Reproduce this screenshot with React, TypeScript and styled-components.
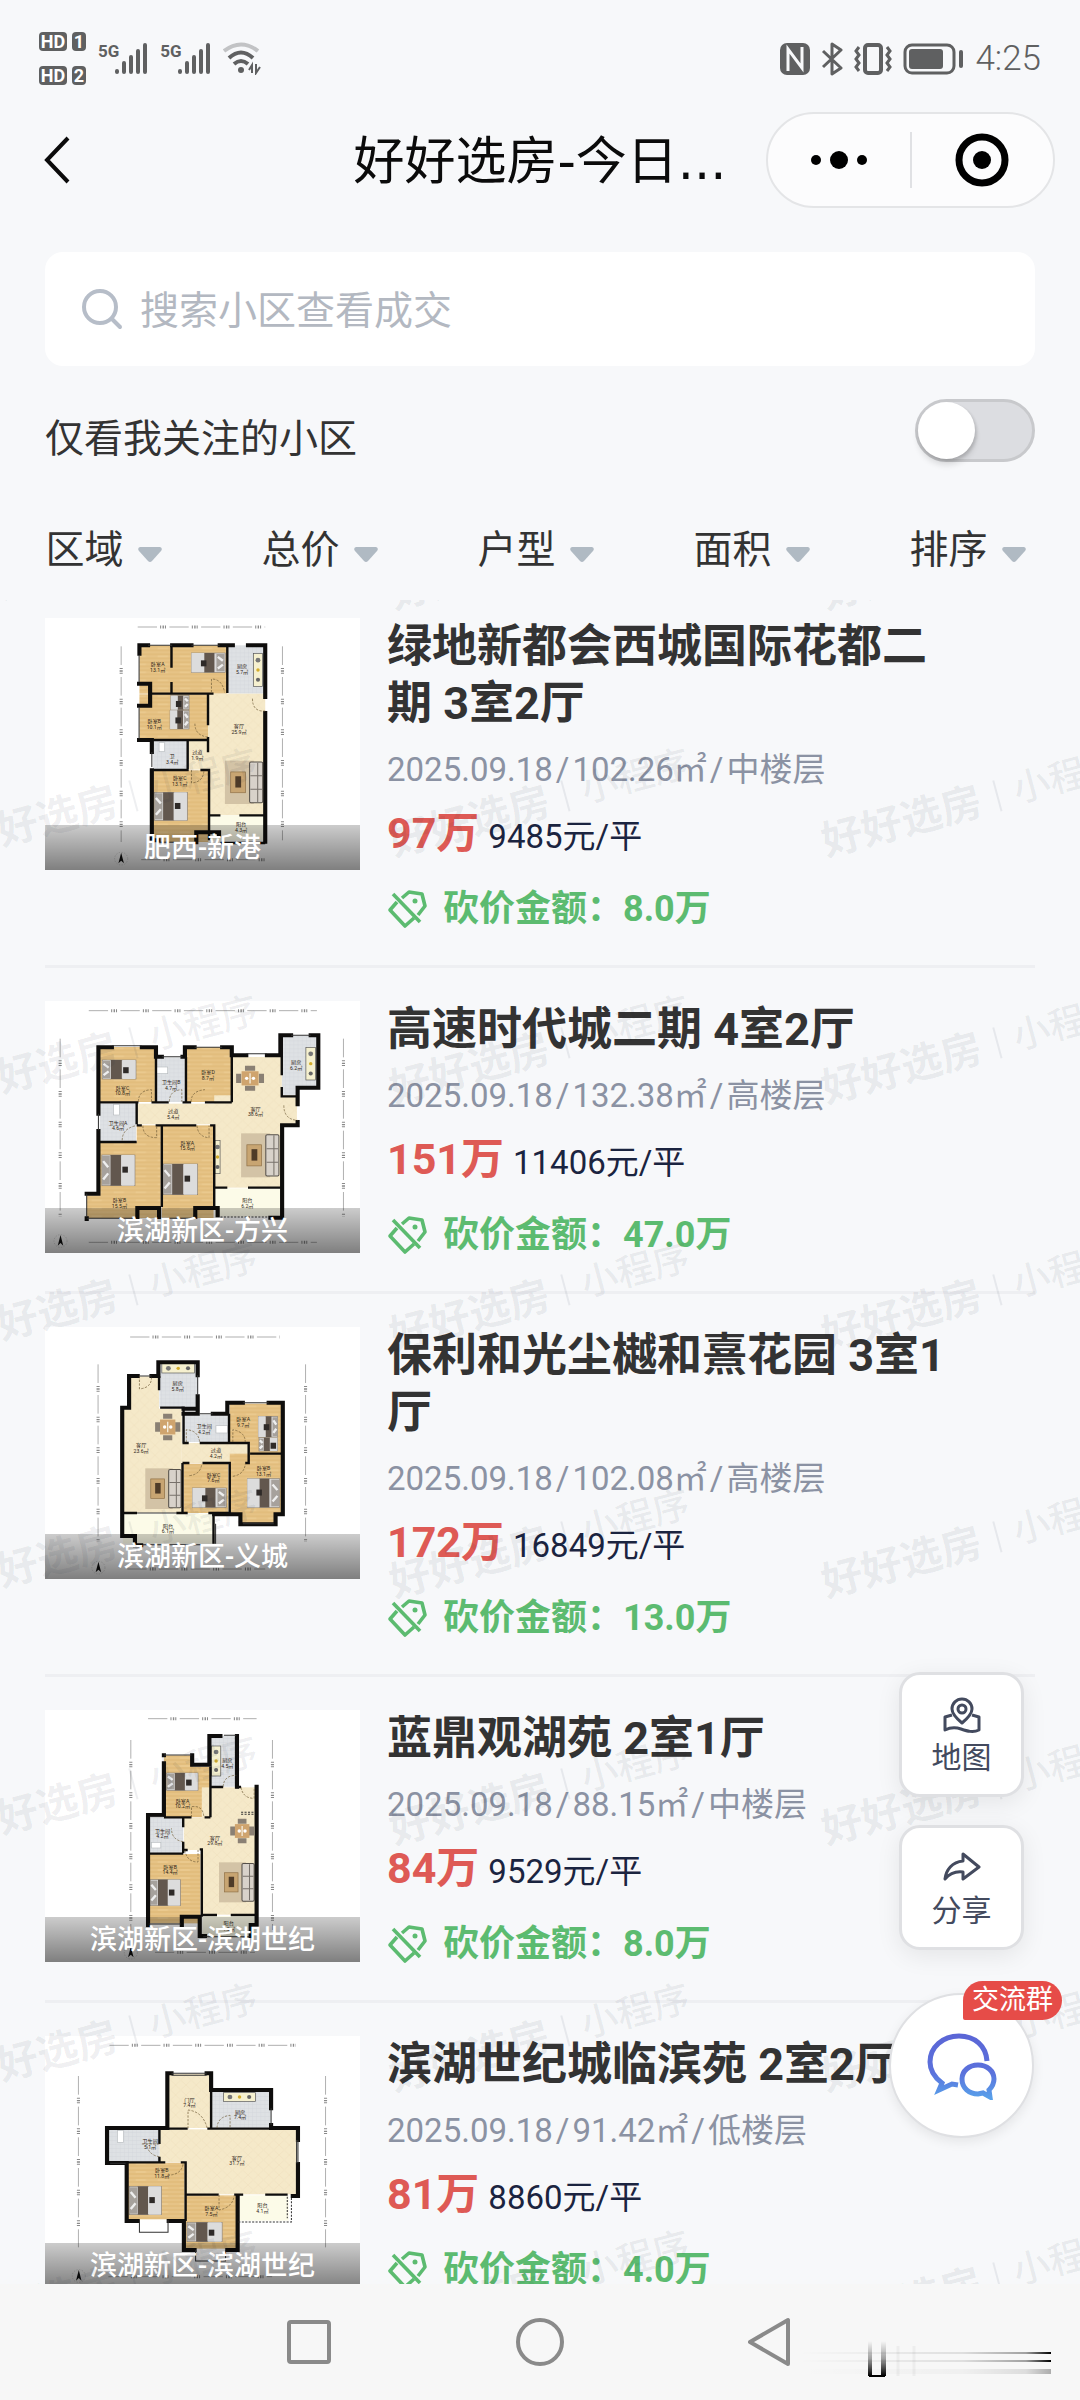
import React from "react";
import styled, { createGlobalStyle } from "styled-components";

const sans = `Roboto, "Noto Sans CJK SC", sans-serif`;

const GlobalStyle = createGlobalStyle`
  *, *::before, *::after { box-sizing: border-box; }
  html, body { margin: 0; padding: 0; }
  body { background: #f7f8fa; font-family: ${sans}; color: #333; }
  button, input { font-family: inherit; color: inherit; }
  button { border: 0; padding: 0; background: none; cursor: pointer; }
`;

/* ---------- page frame ---------- */

const Screen = styled.div`
  position: relative;
  display: flex;
  flex-direction: column;
  height: 100vh;
  overflow: hidden;
  background: #f7f8fa;
`;

const StatusBar = styled.div`
  display: flex;
  align-items: center;
  justify-content: space-between;
  height: 112px;
  padding: 5px 39px 0;
  color: #5f6061;
`;

const StatusGroup = styled.div<{ $gap: number }>`
  display: flex;
  align-items: center;
  gap: ${(p) => p.$gap}px;
`;

const HdStack = styled.div`
  display: flex;
  flex-direction: column;
  gap: 15px;
`;

const HdRow = styled.div`
  display: flex;
  gap: 5px;
`;

const HdBox = styled.span<{ $w: number }>`
  width: ${(p) => p.$w}px;
  height: 19px;
  border-radius: 4px;
  background: #5f6061;
  color: #fff;
  font-size: 18px;
  line-height: 19px;
  font-weight: 700;
  text-align: center;
`;

const Network = styled.div`
  display: flex;
  align-items: flex-start;
`;

const NetworkLabel = styled.span`
  margin-right: -4px;
  font-size: 17px;
  line-height: 16px;
  font-weight: 700;
`;

const Clock = styled.time`
  font-size: 35px;
  line-height: 40px;
  font-weight: 300;
`;

const NavBar = styled.header`
  display: grid;
  grid-template-columns: 1fr auto 1fr;
  align-items: center;
  height: 96px;
  padding: 0 25px;
`;

const BackButton = styled.button`
  display: flex;
  justify-self: start;
  margin-left: 12px;
`;

const NavTitle = styled.h1`
  margin: 0;
  padding-top: 4px;
  color: #0b0b0b;
  font-family: "DejaVu Sans", "Noto Sans CJK SC", sans-serif;
  font-size: 51px;
  line-height: 72px;
  font-weight: 400;
  white-space: nowrap;
`;

const Capsule = styled.div`
  display: flex;
  align-items: center;
  justify-self: end;
  width: 289px;
  height: 96px;
  border: 2px solid #e4e5e7;
  border-radius: 48px;
  background: #fcfcfd;
`;

const CapsuleButton = styled.button`
  display: flex;
  flex: 1;
  align-items: center;
  justify-content: center;
  height: 100%;
`;

const CapsuleRule = styled.i`
  width: 2px;
  height: 56px;
  background: #e0e1e4;
`;

/* ---------- search and filters ---------- */

const SearchBox = styled.label`
  display: flex;
  align-items: center;
  gap: 17px;
  height: 114px;
  margin: 44px 45px 0;
  padding: 0 36px;
  border-radius: 18px;
  background: #fff;
`;

const SearchInput = styled.input`
  flex: 1;
  min-width: 0;
  height: 60px;
  padding: 4px 0 0;
  border: 0;
  outline: 0;
  background: transparent;
  font-size: 39px;

  &::placeholder {
    color: #b3b8c1;
    opacity: 1;
  }
`;

const FollowRow = styled.div`
  display: flex;
  align-items: center;
  justify-content: space-between;
  margin: 33px 45px 0;
  height: 63px;
`;

const FollowLabel = styled.label`
  padding-top: 16px;
  font-size: 39px;
  line-height: 50px;
`;

const Switch = styled.input`
  appearance: none;
  display: flex;
  width: 120px;
  height: 63px;
  margin: 0;
  padding: 0;
  border: 3px solid #c8c9cc;
  border-radius: 32px;
  background: #dcdde1;
  cursor: pointer;

  &::before {
    content: "";
    width: 57px;
    height: 57px;
    border-radius: 50%;
    background: #fff;
    box-shadow: 0 6px 6px rgba(0, 0, 0, 0.12), 2px 2px 3px rgba(0, 0, 0, 0.12);
  }
  &:checked::before {
    margin-left: auto;
  }
`;

const Filters = styled.nav`
  display: grid;
  grid-template-columns: repeat(5, 1fr);
  height: 138px;
  padding-top: 63px;
`;

const FilterButton = styled.button`
  display: flex;
  align-items: center;
  justify-content: center;
  gap: 14px;
  height: 50px;
  padding-right: 9px;
  font-size: 39px;
  line-height: 50px;

  svg {
    margin-top: 8px;
  }
`;

/* ---------- deal list ---------- */

const ListArea = styled.main`
  position: relative;
  flex: 1;
  min-height: 0;
  overflow: hidden;
`;

const List = styled.ul`
  margin: 0;
  padding: 0 45px;
  list-style: none;
`;

const Item = styled.li`
  display: flex;
  align-items: flex-start;
  gap: 27px;
  padding: 33px 0 31px;
  border-bottom: 3px solid #eeeff2;

  &:first-child {
    padding-top: 18px;
  }
`;

const Thumb = styled.figure`
  position: relative;
  flex: none;
  width: 315px;
  height: 252px;
  margin: 0;
  background: #fff;

  svg {
    display: block;
  }
`;

const ThumbCaption = styled.figcaption`
  position: absolute;
  inset: auto 0 0;
  padding-top: 2px;
  background: linear-gradient(rgba(0, 0, 0, 0.2), rgba(0, 0, 0, 0.5));
  color: #fff;
  font-size: 27px;
  line-height: 43px;
  font-weight: 500;
  text-align: center;
`;

const Info = styled.div`
  display: flex;
  flex: 1;
  flex-direction: column;
  min-width: 0;
`;

const ItemTitle = styled.h2`
  max-width: 560px;
  margin: 0;
  font-size: 45px;
  line-height: 57px;
  font-weight: 700;
`;

const Meta = styled.div`
  display: flex;
  gap: 3px;
  margin-top: 13px;
  color: #8b92a3;
  font-size: 33px;
  line-height: 50px;
`;

const PriceRow = styled.div`
  display: flex;
  align-items: baseline;
  gap: 9px;
  margin-top: 8px;
`;

const Price = styled.strong`
  color: #de5a55;
  font-size: 43px;
  line-height: 60px;
  font-weight: 700;
`;

const UnitPrice = styled.span`
  color: #1b2440;
  font-size: 33px;
  line-height: 40px;
`;

const Cut = styled.div`
  display: flex;
  align-items: center;
  gap: 16px;
  margin-top: 21px;
  color: #5cbb70;
  font-size: 36px;
  line-height: 50px;
  font-weight: 700;
`;

/* ---------- watermark ---------- */

const WatermarkLayer = styled.div`
  position: absolute;
  inset: 0;
  overflow: hidden;
  pointer-events: none;
`;

const WatermarkGrid = styled.div`
  display: grid;
  grid-template-columns: repeat(3, 432px);
  grid-auto-rows: 247px;
  margin: -231px 0 0 -44px;
`;

const Mark = styled.span`
  display: flex;
  align-items: center;
  align-self: end;
  justify-self: start;
  margin-left: 8px;
  transform: rotate(-15deg);
  transform-origin: left bottom;
  color: rgba(20, 30, 50, 0.07);
  font-size: 41px;
  line-height: 42px;
  font-weight: 700;
  white-space: nowrap;
`;

const MarkRule = styled.i`
  width: 2px;
  height: 32px;
  margin: 0 16px;
  background: rgba(20, 30, 50, 0.07);
`;

const MarkTail = styled.span`
  font-size: 37px;
  font-weight: 500;
`;

/* ---------- floating actions ---------- */

const FloatStack = styled.aside`
  position: absolute;
  right: 46px;
  bottom: 262px;
  display: flex;
  flex-direction: column;
  align-items: center;
  gap: 28px;
`;

const FloatButton = styled.button`
  display: flex;
  flex-direction: column;
  align-items: center;
  gap: 2px;
  width: 125px;
  height: 125px;
  padding-top: 21px;
  border: 3px solid #dfe0e3;
  border-radius: 21px;
  background: #fff;
  box-shadow: 0 6px 24px rgba(0, 0, 0, 0.08);
  color: #434a5e;
  font-size: 30px;
  line-height: 44px;
`;

const ChatButton = styled.button`
  position: relative;
  display: flex;
  align-items: center;
  justify-content: center;
  width: 145px;
  height: 145px;
  margin-top: 15px;
  border: 2px solid #dfe0e3;
  border-radius: 50%;
  background: #fff;
  box-shadow: 0 4px 12px rgba(0, 0, 0, 0.08);
`;

const ChatBadge = styled.span`
  position: absolute;
  top: -14px;
  right: -30px;
  width: 99px;
  border-radius: 20px 20px 20px 2px;
  background: #e64c48;
  color: #fff;
  font-size: 27px;
  line-height: 39px;
  text-align: center;
`;

/* ---------- system navigation ---------- */

const SystemBar = styled.footer`
  position: relative;
  display: flex;
  justify-content: center;
  height: 116px;
  background: #f7f7f7;
`;

const SystemButton = styled.button`
  display: flex;
  align-items: center;
  justify-content: center;
  width: 231px;
`;

const Smear = styled.svg`
  position: absolute;
  right: 24px;
  bottom: 18px;
`;

/* ---------- icons ---------- */

const SignalBars = () => (
  <svg width="33" height="31" viewBox="0 0 33 31" stroke="currentColor" strokeWidth="4" strokeLinecap="round">
    <path d="M2 28v1M9 20v9M16 14v15M23 8v21M30 2v27" />
  </svg>
);

const WifiIcon = () => (
  <svg width="38" height="33" viewBox="0 0 38 33" fill="none" stroke="currentColor" strokeWidth="4">
    <path d="M1 9Q18-4 35 9" opacity="0.35" />
    <path d="M6 16Q18 5 30 16" />
    <path d="M11 22q7-6 14 0" />
    <circle cx="18" cy="28" r="3" fill="currentColor" stroke="none" />
    <path d="M29 31v-8l-3 5M33 22v9l4-6" strokeWidth="2" />
  </svg>
);

const NfcIcon = () => (
  <svg width="30" height="32" viewBox="0 0 30 32">
    <rect width="30" height="32" rx="7" fill="currentColor" />
    <path d="M8 28V6l14 19V4" fill="none" stroke="#f7f8fa" strokeWidth="3" />
  </svg>
);

const BluetoothIcon = () => (
  <svg width="22" height="34" viewBox="0 0 22 34" fill="none" stroke="currentColor" strokeWidth="3" strokeLinejoin="round">
    <path d="M2 9l18 17-9 6V2l9 6L2 25" />
  </svg>
);

const VibrateIcon = () => (
  <svg width="38" height="32" viewBox="0 0 38 32" fill="none" stroke="currentColor" strokeWidth="3">
    <rect x="11" y="2" width="16" height="28" rx="3" strokeWidth="4" />
    <path d="M5 4L2 8l3 4-3 4 3 4-3 4 3 4M33 4l3 4-3 4 3 4-3 4 3 4-3 4" />
  </svg>
);

const BatteryIcon = () => (
  <svg width="61" height="32" viewBox="0 0 61 32">
    <rect x="2" y="2" width="49" height="28" rx="7" fill="none" stroke="currentColor" strokeWidth="3" />
    <rect x="6" y="6" width="34" height="20" rx="3" fill="currentColor" />
    <path d="M58 9v14" stroke="currentColor" strokeWidth="4" strokeLinecap="round" />
  </svg>
);

const BackIcon = () => (
  <svg width="36" height="54" viewBox="0 0 36 54" fill="none" stroke="#0b0b0b" strokeWidth="4">
    <path d="M31 5L10 27l21 22" />
  </svg>
);

const MoreIcon = () => (
  <svg width="60" height="24" viewBox="0 0 60 24" fill="#000">
    <circle cx="7" cy="12" r="5" />
    <circle cx="30" cy="12" r="9" />
    <circle cx="53" cy="12" r="5" />
  </svg>
);

const TargetIcon = () => (
  <svg width="54" height="54" viewBox="0 0 54 54" fill="none" stroke="#000">
    <circle cx="27" cy="27" r="23" strokeWidth="7" />
    <circle cx="27" cy="27" r="9" fill="#000" stroke="none" />
  </svg>
);

const SearchIcon = () => (
  <svg width="42" height="42" viewBox="0 0 42 42" fill="none" stroke="#b6bdc8" strokeWidth="4" strokeLinecap="round">
    <circle cx="19" cy="19" r="16" />
    <path d="M31 31l8 8" />
  </svg>
);

const CaretIcon = () => (
  <svg width="24" height="15" viewBox="0 0 24 15" fill="#b0bac3">
    <path d="M2 0h20q3 1 1 4L14 14q-2 2-4 0L1 4q-2-3 1-4z" />
  </svg>
);

const TagIcon = () => (
  <svg width="40" height="40" viewBox="0 0 40 40" fill="none" stroke="currentColor" strokeWidth="3.600" strokeLinejoin="round">
    <path d="M15 9l7-6 13 2 3 12-7 9" />
    <path d="M10 13l-7 8 15 16 9-8" />
    <path d="M6 5l27 28" />
    <circle cx="28" cy="12" r="2.500" fill="currentColor" stroke="none" />
  </svg>
);

const MapIcon = () => (
  <svg width="38" height="38" viewBox="0 0 38 38" fill="none" stroke="currentColor" strokeWidth="3" strokeLinejoin="round">
    <path d="M19 27c-6-5-10-9-10-14a10 10 0 0 1 20 0c0 5-4 9-10 14z" />
    <circle cx="19" cy="13" r="4" />
    <path d="M9 19l-7 2v13c6-3 10-3 16-1s12 4 18 1V21l-7-2" />
  </svg>
);

const ShareIcon = () => (
  <svg width="38" height="38" viewBox="0 0 38 38" fill="none" stroke="currentColor" strokeWidth="3" strokeLinejoin="round">
    <path d="M20 12V5l16 13-16 12v-7c-8-1-13 1-18 7 1-9 7-17 18-18z" />
  </svg>
);

const ChatIcon = () => (
  <svg width="72" height="68" viewBox="0 0 72 68" fill="none" strokeWidth="5">
    <defs>
      <linearGradient id="chatTone" gradientUnits="userSpaceOnUse" x1="0" y1="4" x2="0" y2="66">
        <stop offset="0" stopColor="#5b66d6" />
        <stop offset="0.6" stopColor="#5b72dc" />
        <stop offset="1" stopColor="#58a0ea" />
      </linearGradient>
    </defs>
    <g stroke="url(#chatTone)">
      <path d="M61 29C60 14 49 4 33 4 17 4 4 15 4 30c0 9 4 15 12 21l-3 7 13-6 6 1" />
      <path d="M52 33c-9 0-16 6-16 14 0 9 7 15 16 15l5-1 7 4-1-7c3-3 5-7 5-11 0-8-7-14-16-14z" />
    </g>
  </svg>
);

/* ---------- floor plans ---------- */

type Box = [number, number, number, number];
type Kind = "wood" | "tile" | "hall" | "balcony";
type Furniture = { kind: "bedE" | "bedW" | "sofa" | "dining" | "kitchen" | "kitchenH" | "basin"; box: Box };
type Plan = {
  top: number;
  rooms: { kind: Kind; box: Box; name?: string; at?: [number, number]; size?: string }[];
  outer: string;
  inner: string;
  doors: string;
  windows?: string;
  dashed?: string;
  items: Furniture[];
  rulers: string;
  compass: [number, number];
};

const FurnitureShape = ({ kind, box: [x, y, w, h] }: Furniture) => {
  if (kind === "sofa")
    return (
      <g>
        <rect x={x} y={y} width={w * 0.75} height={h} fill="#d3c3a6" />
        <rect x={x + w * 0.15} y={y + h * 0.26} width={w * 0.38} height={h * 0.48} fill="#c8a572" stroke="#8f7046" strokeWidth="2" />
        <rect x={x + w * 0.27} y={y + h * 0.36} width={w * 0.15} height={h * 0.26} fill="#4e3b28" />
        <rect x={x + w * 0.64} y={y + h * 0.03} width={w * 0.34} height={h * 0.94} rx="4" fill="#d8d2ca" stroke="#55504a" strokeWidth="3" />
        <path d={`M${x + w * 0.85} ${y + 6}v${h - 12}M${x + w * 0.66} ${y + h * 0.35}h${w * 0.3}M${x + w * 0.66} ${y + h * 0.66}h${w * 0.3}`} stroke="#77716b" strokeWidth="3" />
      </g>
    );
  if (kind === "dining")
    return (
      <g>
        <path
          d={`M${x + w * 0.32} ${y + 8}h${w * 0.36}M${x + w * 0.32} ${y + h - 8}h${w * 0.36}M${x + 8} ${y + h * 0.32}v${h * 0.36}M${x + w - 8} ${y + h * 0.32}v${h * 0.36}`}
          stroke="#8a8074"
          strokeWidth="15"
        />
        <rect x={x + w * 0.2} y={y + h * 0.22} width={w * 0.6} height={h * 0.56} fill="#cfa46e" />
        <circle cx={x + w * 0.38} cy={y + h * 0.5} r="5" fill="#fff" />
        <circle cx={x + w * 0.62} cy={y + h * 0.5} r="5" fill="#fff" />
        <path d={`M${x + w * 0.5} ${y + h * 0.3}v${h * 0.4}`} stroke="#f3ead7" strokeWidth="4" />
      </g>
    );
  if (kind === "kitchen" || kind === "kitchenH")
    return (
      <g>
        <rect x={x} y={y} width={w} height={h} fill="#f5f0cf" stroke="#555" strokeWidth="2" />
        <circle cx={x + (kind === "kitchen" ? w / 2 : w * 0.2)} cy={y + (kind === "kitchen" ? h * 0.2 : h / 2)} r="7" fill="#777" />
        <circle cx={x + w / 2} cy={y + h / 2} r="5" fill="#d3ad2e" />
        <circle cx={x + (kind === "kitchen" ? w / 2 : w * 0.8)} cy={y + (kind === "kitchen" ? h * 0.8 : h / 2)} r="6" fill="#666" />
      </g>
    );
  if (kind === "basin") return <rect x={x} y={y} width={w} height={h} fill="#fff" stroke="#b9bdc0" strokeWidth="2" />;
  const west = kind === "bedW";
  const px = west ? x : x + w * 0.74;
  const sheet = west ? x + w * 0.26 : x + w * 0.36;
  const blanket = west ? x + w * 0.6 : x;
  return (
    <g>
      <rect x={x} y={y} width={w} height={h} fill="#d9d8d8" stroke="#8c8378" strokeWidth="2" />
      <rect x={px} y={y + 3} width={w * 0.24} height={h - 6} fill="#a6a19c" />
      <path d={`M${px + w * 0.04} ${y + h * 0.2}l${w * 0.15} ${h * 0.2}M${px + w * 0.04} ${y + h * 0.8}l${w * 0.15}-${h * 0.2}`} stroke="#eee" strokeWidth="7" />
      <rect x={sheet} y={y} width={w * 0.32} height={h} fill="#62574e" />
      <rect x={blanket} y={y} width={w * 0.38} height={h} fill="#dcdcdc" />
      <rect x={west ? x + w * 0.62 : x + w * 0.28} y={y + h * 0.38} width="16" height="18" fill="#2e2a28" />
    </g>
  );
};

const FloorPlan = ({ plan, name }: { plan: Plan; name: string }) => {
  const [cx, cy] = plan.compass;
  return (
    <svg width="315" height="252" viewBox={`131 ${plan.top} 914 756`} preserveAspectRatio="none" role="img" aria-label={name}>
      <defs>
        <pattern id="wood" width="64" height="24" patternUnits="userSpaceOnUse">
          <rect width="64" height="24" fill="#e6c386" />
          <path d="M0 6h64M0 18h64" stroke="#deb775" strokeWidth="3" />
          <path d="M10 12h30" stroke="#eed096" strokeWidth="3" />
        </pattern>
        <pattern id="tile" width="12" height="12" patternUnits="userSpaceOnUse">
          <rect width="12" height="12" fill="#dee1e4" />
          <path d="M0 0h12M0 0v12" stroke="#d2d6d9" strokeWidth="2" />
        </pattern>
        <pattern id="hall" width="30" height="30" patternUnits="userSpaceOnUse">
          <rect width="30" height="30" fill="#f5e9c9" />
          <path d="M0 15l15-15 15 15-15 15z" fill="none" stroke="#efe1bf" strokeWidth="2" />
        </pattern>
        <pattern id="balcony" width="20" height="20" patternUnits="userSpaceOnUse">
          <rect width="20" height="20" fill="#fcfbe8" />
        </pattern>
      </defs>
      {plan.rooms.map((r, i) => (
        <rect key={i} x={r.box[0]} y={r.box[1]} width={r.box[2]} height={r.box[3]} fill={`url(#${r.kind})`} />
      ))}
      {plan.items.map((f, i) => (
        <FurnitureShape key={i} {...f} />
      ))}
      <g fill="none" stroke="#0e0d0c">
        <path d={plan.inner} strokeWidth="7" />
        <path d={plan.outer} strokeWidth="12" strokeLinecap="square" />
        <path d={plan.doors} stroke="#6d5a36" strokeWidth="2" strokeDasharray="7 4" />
        {plan.windows && <path d={plan.windows} stroke="#333" strokeWidth="3" />}
        {plan.dashed && <path d={plan.dashed} stroke="#333" strokeWidth="3" strokeDasharray="6 4" />}
        <path d={plan.rulers} stroke="#8a8a8a" strokeWidth="2" strokeDasharray="56 36" />
        <path d={plan.rulers} stroke="#8a8a8a" strokeWidth="9" strokeDasharray="3 4 4 3 3 75" strokeDashoffset="-65" />
        <circle cx={cx} cy={cy} r="19" stroke="#999" strokeWidth="1" strokeDasharray="4 4" />
        <path d={`M${cx} ${cy - 18}l8 32-8-8-8 8z`} fill="#111" stroke="none" />
      </g>
      <g fontSize="15" fill="#2c2417" textAnchor="middle">
        {plan.rooms.map(
          (r, i) =>
            r.name &&
            r.at && (
              <text key={i} x={r.at[0]} y={r.at[1]}>
                {r.name}
                <tspan x={r.at[0]} dy="17">
                  {r.size}
                </tspan>
              </text>
            )
        )}
      </g>
    </svg>
  );
};

const plans: Plan[] = [
  {
    top: 113,
    rooms: [
      { kind: "wood", box: [405, 195, 255, 145], name: "卧室A", at: [458, 258], size: "13.1㎡" },
      { kind: "tile", box: [663, 195, 107, 145], name: "厨房", at: [703, 264], size: "5.7㎡" },
      { kind: "wood", box: [405, 342, 199, 135], name: "卧室B", at: [448, 428], size: "10.1㎡" },
      { kind: "hall", box: [604, 340, 166, 365], name: "客厅", at: [694, 444], size: "25.9㎡" },
      { kind: "tile", box: [445, 480, 100, 88], name: "卫", at: [500, 534], size: "3.4㎡" },
      { kind: "hall", box: [548, 480, 56, 88], name: "过道", at: [573, 521], size: "1.9㎡" },
      { kind: "wood", box: [445, 570, 160, 215], name: "卧室C", at: [522, 600], size: "13.1㎡" },
      { kind: "balcony", box: [607, 705, 163, 75], name: "阳台", at: [700, 737], size: "4.3㎡" },
    ],
    outer: "M405 220V195H430M500 195H556M638 195H676M720 195H770V350M770 398V784M404 310H436V376H404M404 479H441V515M441 570V780H460M570 786V756H636V765",
    inner: "M498 195V262M498 305V340M660 195V338M440 340H620M604 340V435M604 470V516M545 479V566M445 479H604M445 569H548M582 569H607V780M607 705H640M695 705H770M640 788H770",
    doors: "M614 336V296Q645 296 652 336M604 470Q566 466 566 430M556 569V608Q590 605 592 572M733 355Q733 395 770 392",
    windows: "M430 195H500M556 195H638M404 225V305M404 380V475M441 515V560M460 786H565",
    items: [
      { kind: "bedE", box: [556, 218, 98, 58] },
      { kind: "bedE", box: [494, 390, 55, 56] },
      { kind: "bedE", box: [496, 346, 53, 42] },
      { kind: "kitchen", box: [736, 220, 26, 98] },
      { kind: "basin", box: [462, 486, 16, 28] },
      { kind: "sofa", box: [653, 541, 112, 130] },
      { kind: "bedW", box: [449, 636, 95, 84] },
    ],
    rulers: "M352 198V785M820 198V780M400 140H770M410 838H770",
    compass: [352, 835],
  },
  {
    top: 62,
    rooms: [
      { kind: "wood", box: [285, 200, 165, 165], name: "卧室C", at: [356, 328], size: "10.8㎡" },
      { kind: "tile", box: [455, 232, 82, 133], name: "卫生间B", at: [497, 311], size: "4.7㎡" },
      { kind: "wood", box: [542, 200, 131, 165], name: "卧室D", at: [604, 281], size: "8.7㎡" },
      { kind: "tile", box: [818, 165, 106, 157], name: "厨房", at: [860, 252], size: "6.2㎡" },
      { kind: "tile", box: [818, 320, 40, 26] },
      { kind: "hall", box: [397, 370, 426, 62], name: "过道", at: [503, 399], size: "5.4㎡" },
      { kind: "hall", box: [673, 230, 145, 205] },
      { kind: "hall", box: [622, 345, 240, 90] },
      { kind: "hall", box: [622, 430, 196, 192], name: "客厅", at: [742, 391], size: "38.6㎡" },
      { kind: "tile", box: [290, 370, 105, 115], name: "卫生间A", at: [343, 433], size: "4.6㎡" },
      { kind: "wood", box: [290, 485, 177, 228], name: "卧室B", at: [347, 665], size: "15.5㎡" },
      { kind: "wood", box: [397, 435, 70, 60] },
      { kind: "wood", box: [252, 645, 50, 68] },
      { kind: "wood", box: [470, 435, 150, 278], name: "卧室A", at: [544, 493], size: "15.6㎡" },
      { kind: "balcony", box: [625, 624, 190, 85], name: "阳台", at: [718, 665], size: "6.2㎡" },
    ],
    outer: "M286 400V201H325M412 201H453V229H470M530 229H537V201H565M645 201H673V225H715M775 225H814V165H845M902 165H924V322H864V372M864 425V435H819V712H785M286 452V640H252M399 710V683H462V710M567 710V683H632V705M252 714V716",
    inner: "M453 230V366M540 230V366M673 225V366M290 366H402M440 366H490M530 366H555M595 366H673M397 366V432M290 485H397M397 435H412M452 435H470V680M470 435H570M610 435H622V680M625 622H660M720 622H815M818 165V285M818 320V348H864",
    doors: "M402 364Q402 330 440 328V364M492 364Q492 330 528 328V364M555 364Q555 332 595 328M355 480Q355 445 395 436M415 436Q415 472 455 472V436M572 436Q575 470 607 472V436M824 375Q824 418 864 420",
    windows: "M325 196H412M470 229H530M565 201H645M715 220H775M845 165H902M286 400V450M252 640V710M252 714H395M470 714H565",
    dashed: "M640 710H780",
    items: [
      { kind: "bedW", box: [297, 239, 98, 57] },
      { kind: "basin", box: [455, 260, 32, 20] },
      { kind: "basin", box: [330, 372, 17, 32] },
      { kind: "dining", box: [685, 256, 82, 76] },
      { kind: "kitchen", box: [888, 201, 28, 98] },
      { kind: "bedW", box: [296, 524, 96, 92] },
      { kind: "bedW", box: [474, 551, 100, 92] },
      { kind: "sofa", box: [700, 459, 112, 132] },
      { kind: "kitchen", box: [624, 480, 15, 100] },
    ],
    rulers: "M175 175V708M997 175V708M258 91H920M258 786H920",
    compass: [176, 782],
  },
  {
    top: 110,
    rooms: [
      { kind: "hall", box: [378, 258, 84, 110] },
      { kind: "hall", box: [357, 355, 171, 312], name: "客厅", at: [410, 471], size: "23.6㎡" },
      { kind: "tile", box: [463, 218, 112, 132], name: "厨房", at: [516, 284], size: "5.8㎡" },
      { kind: "tile", box: [533, 373, 130, 82], name: "卫生间", at: [593, 413], size: "4.2㎡" },
      { kind: "wood", box: [667, 340, 152, 148], name: "卧室A", at: [706, 392], size: "9.7㎡" },
      { kind: "hall", box: [528, 458, 196, 60], name: "过道", at: [627, 486], size: "4.2㎡" },
      { kind: "wood", box: [533, 520, 130, 148], name: "卧室C", at: [620, 559], size: "7.6㎡" },
      { kind: "wood", box: [667, 490, 152, 180], name: "卧室B", at: [765, 540], size: "13.1㎡" },
      { kind: "wood", box: [698, 668, 98, 36] },
      { kind: "balcony", box: [357, 670, 266, 90], name: "阳台", at: [488, 712], size: "6.1㎡" },
    ],
    outer: "M400 257H375V352H355V737H392V765H410M440 257H460V216H574V255M574 318V370H533M618 370H660V337H705M780 337H821V672H800V702M622 672H698V702H800M533 355H570",
    inner: "M462 257V300M465 352H533V458M530 458H548M580 458H665V370M665 458H722V518H712M726 490H820M530 518H550M588 518H667V668M530 518V668M357 668H398M512 668H545M605 668H665M620 670V760",
    doors: "M405 257V296Q440 292 440 262M541 455V418Q575 420 580 455M676 455V418Q712 425 712 455M550 556Q583 552 586 520M676 558Q710 552 712 520",
    windows: "M405 257H440M574 255V315M578 370H618M705 337H780M398 668H512M415 763H620M705 700H795M626 700V760",
    items: [
      { kind: "dining", box: [450, 370, 74, 80] },
      { kind: "kitchenH", box: [470, 220, 95, 28] },
      { kind: "basin", box: [627, 406, 34, 22] },
      { kind: "bedE", box: [750, 378, 56, 62] },
      { kind: "bedW", box: [752, 442, 54, 40] },
      { kind: "bedE", box: [559, 593, 98, 58] },
      { kind: "bedE", box: [718, 565, 94, 86] },
      { kind: "sofa", box: [422, 534, 106, 122] },
    ],
    rulers: "M285 222V755M887 222V755M378 140H812M370 836H770",
    compass: [286, 832],
  },
  {
    top: 60,
    rooms: [
      { kind: "wood", box: [476, 196, 84, 50] },
      { kind: "wood", box: [476, 230, 134, 152], name: "卧室A", at: [530, 338], size: "10.2㎡" },
      { kind: "tile", box: [612, 138, 76, 152], name: "厨房", at: [660, 216], size: "4.5㎡" },
      { kind: "hall", box: [534, 384, 80, 96] },
      { kind: "hall", box: [586, 292, 158, 382], name: "客厅", at: [624, 449], size: "29.8㎡" },
      { kind: "tile", box: [432, 384, 100, 106], name: "卫生间", at: [472, 428], size: "4.2㎡" },
      { kind: "wood", box: [432, 492, 150, 208], name: "卧室B", at: [494, 536], size: "14.4㎡" },
      { kind: "balcony", box: [588, 678, 156, 64], name: "阳台", at: [664, 705], size: "4.5㎡" },
    ],
    outer: "M476 220V375H430V705M476 196V196M558 196V224H608V138H640M688 138V290M745 290V705H728V738M528 705V680H580V738H595",
    inner: "M611 230V382M612 291H648M684 291H700M476 382H556M594 382H611M532 384V412M532 455V490M432 491H532M580 478H586V680M532 480H545M588 675H630M670 675H745",
    doors: "M556 382V350Q590 345 592 382M532 455Q498 450 498 415M537 480Q542 516 575 516V480M648 290Q650 256 686 256M700 292Q705 325 738 325V292",
    windows: "M476 195H556M650 136H686M435 380H475M432 702H525M590 740H725",
    dashed: "M700 367H740M700 373H740",
    items: [
      { kind: "bedW", box: [484, 249, 91, 52] },
      { kind: "kitchen", box: [614, 168, 27, 90] },
      { kind: "basin", box: [440, 457, 27, 17] },
      { kind: "dining", box: [668, 386, 70, 74] },
      { kind: "bedW", box: [436, 569, 88, 78] },
      { kind: "sofa", box: [636, 517, 104, 120] },
    ],
    rulers: "M380 150V720M791 150V720M430 86H745M450 787H740",
    compass: [380, 788],
  },
  {
    top: 108,
    rooms: [
      { kind: "hall", box: [486, 222, 128, 162], name: "门厅", at: [550, 305], size: "7.4㎡" },
      { kind: "tile", box: [612, 272, 174, 112], name: "厨房", at: [697, 341], size: "7.4㎡" },
      { kind: "tile", box: [312, 388, 152, 98], name: "卫生间", at: [436, 430], size: "5.1㎡" },
      { kind: "hall", box: [464, 388, 396, 98] },
      { kind: "hall", box: [539, 480, 322, 103], name: "客厅", at: [688, 479], size: "31.7㎡" },
      { kind: "wood", box: [370, 488, 166, 170], name: "卧室B", at: [470, 517], size: "11.8㎡" },
      { kind: "wood", box: [539, 586, 148, 160], name: "卧室A", at: [614, 630], size: "7.5㎡" },
      { kind: "balcony", box: [692, 586, 146, 76], name: "阳台", at: [762, 621], size: "4.1㎡" },
    ],
    outer: "M498 220H486V384H311V489H368V663H400M600 220H613V270H787V325M787 375V384H865V420M865 492V588H850M490 663H534V750H565M660 750H690V590",
    inner: "M613 270V384M486 386H545M602 386H865M463 388V432M463 470V488M370 487H480M525 487H539V663M539 584H635M680 584H706M770 584H835",
    doors: "M546 386V330Q590 335 602 386M630 384Q632 350 668 346V384M463 432H408M463 470Q430 465 426 432M486 526Q530 524 532 488M636 584V630Q676 622 680 586",
    windows: "M498 220H600M498 226H600M787 325V375M865 420V490M861 420V490M405 660V697H488V660M568 750V783H655V750M320 490H365",
    dashed: "M692 666H846V590M834 590V655",
    items: [
      { kind: "kitchenH", box: [649, 278, 93, 26] },
      { kind: "basin", box: [341, 391, 18, 36] },
      { kind: "bedW", box: [376, 559, 93, 85] },
      { kind: "bedW", box: [543, 667, 102, 58] },
    ],
    rulers: "M228 228V742M945 228V742M318 136H858M315 830H790",
    compass: [229, 828],
  },
];

/* ---------- content ---------- */

const filters = ["区域", "总价", "户型", "面积", "排序"];

const deals = [
  { title: "绿地新都会西城国际花都二期 3室2厅", area: "102.26㎡", floor: "中楼层", price: "97万", unit: "9485元/平", cut: "8.0万", place: "肥西-新港" },
  { title: "高速时代城二期 4室2厅", area: "132.38㎡", floor: "高楼层", price: "151万", unit: "11406元/平", cut: "47.0万", place: "滨湖新区-方兴" },
  { title: "保利和光尘樾和熹花园 3室1厅", area: "102.08㎡", floor: "高楼层", price: "172万", unit: "16849元/平", cut: "13.0万", place: "滨湖新区-义城" },
  { title: "蓝鼎观湖苑 2室1厅", area: "88.15㎡", floor: "中楼层", price: "84万", unit: "9529元/平", cut: "8.0万", place: "滨湖新区-滨湖世纪" },
  { title: "滨湖世纪城临滨苑 2室2厅", area: "91.42㎡", floor: "低楼层", price: "81万", unit: "8860元/平", cut: "4.0万", place: "滨湖新区-滨湖世纪" },
];

const marks = Array.from({ length: 24 }, (_, i) => i);

export default function App() {
  return (
    <Screen>
      <GlobalStyle />
      <StatusBar>
        <StatusGroup $gap={12}>
          <HdStack>
            <HdRow>
              <HdBox $w={28}>HD</HdBox>
              <HdBox $w={14}>1</HdBox>
            </HdRow>
            <HdRow>
              <HdBox $w={28}>HD</HdBox>
              <HdBox $w={14}>2</HdBox>
            </HdRow>
          </HdStack>
          <Network>
            <NetworkLabel>5G</NetworkLabel>
            <SignalBars />
          </Network>
          <Network>
            <NetworkLabel>5G</NetworkLabel>
            <SignalBars />
          </Network>
          <WifiIcon />
        </StatusGroup>
        <StatusGroup $gap={11}>
          <NfcIcon />
          <BluetoothIcon />
          <VibrateIcon />
          <BatteryIcon />
          <Clock>4:25</Clock>
        </StatusGroup>
      </StatusBar>

      <NavBar>
        <BackButton aria-label="返回">
          <BackIcon />
        </BackButton>
        <NavTitle>好好选房-今日...</NavTitle>
        <Capsule>
          <CapsuleButton aria-label="更多">
            <MoreIcon />
          </CapsuleButton>
          <CapsuleRule />
          <CapsuleButton aria-label="关闭">
            <TargetIcon />
          </CapsuleButton>
        </Capsule>
      </NavBar>

      <SearchBox>
        <SearchIcon />
        <SearchInput type="text" placeholder="搜索小区查看成交" aria-label="搜索小区查看成交" />
      </SearchBox>

      <FollowRow>
        <FollowLabel htmlFor="follow">仅看我关注的小区</FollowLabel>
        <Switch id="follow" type="checkbox" />
      </FollowRow>

      <Filters>
        {filters.map((f) => (
          <FilterButton key={f} aria-haspopup="listbox">
            {f}
            <CaretIcon />
          </FilterButton>
        ))}
      </Filters>

      <ListArea>
        <List>
          {deals.map((d, i) => (
            <Item key={d.title}>
              <Thumb>
                <FloorPlan plan={plans[i]} name={d.title} />
                <ThumbCaption>{d.place}</ThumbCaption>
              </Thumb>
              <Info>
                <ItemTitle>{d.title}</ItemTitle>
                <Meta>
                  <span>2025.09.18</span>
                  <span>/</span>
                  <span>{d.area}</span>
                  <span>/</span>
                  <span>{d.floor}</span>
                </Meta>
                <PriceRow>
                  <Price>{d.price}</Price>
                  <UnitPrice>{d.unit}</UnitPrice>
                </PriceRow>
                <Cut>
                  <TagIcon />
                  <span>砍价金额：{d.cut}</span>
                </Cut>
              </Info>
            </Item>
          ))}
        </List>
        <WatermarkLayer aria-hidden="true">
          <WatermarkGrid>
            {marks.map((m) => (
              <Mark key={m}>
                好好选房
                <MarkRule />
                <MarkTail>小程序</MarkTail>
              </Mark>
            ))}
          </WatermarkGrid>
        </WatermarkLayer>
      </ListArea>

      <FloatStack>
        <FloatButton>
          <MapIcon />
          地图
        </FloatButton>
        <FloatButton>
          <ShareIcon />
          分享
        </FloatButton>
        <ChatButton>
          <ChatIcon />
          <ChatBadge>交流群</ChatBadge>
        </ChatButton>
      </FloatStack>

      <SystemBar>
        <SystemButton aria-label="最近任务">
          <svg width="46" height="46" viewBox="0 0 46 46" fill="none" stroke="#8a8a8a" strokeWidth="4">
            <rect x="3" y="3" width="40" height="40" rx="2" />
          </svg>
        </SystemButton>
        <SystemButton aria-label="主屏幕">
          <svg width="50" height="50" viewBox="0 0 50 50" fill="none" stroke="#8a8a8a" strokeWidth="4">
            <circle cx="25" cy="25" r="22" />
          </svg>
        </SystemButton>
        <SystemButton aria-label="后退">
          <svg width="46" height="50" viewBox="0 0 46 50" fill="none" stroke="#8a8a8a" strokeWidth="4" strokeLinejoin="round">
            <path d="M40 3v44L2 25z" />
          </svg>
        </SystemButton>
        <Smear width="260" height="44" viewBox="0 0 260 44" aria-hidden="true">
          <defs>
            <linearGradient id="fadeX">
              <stop offset="0" stopColor="#000" stopOpacity="0" />
              <stop offset="0.65" stopColor="#000" stopOpacity="0.1" />
              <stop offset="0.9" stopColor="#000" stopOpacity="0.35" />
              <stop offset="1" stopColor="#000" />
            </linearGradient>
            <linearGradient id="fadeY" x2="0" y2="1">
              <stop offset="0" stopColor="#000" stopOpacity="0" />
              <stop offset="0.5" stopColor="#000" stopOpacity="0.35" />
              <stop offset="1" stopColor="#000" />
            </linearGradient>
          </defs>
          <g fill="url(#fadeX)">
            <rect x="4" y="14" width="251" height="2" />
            <rect x="4" y="22" width="251" height="2" />
            <rect x="4" y="31" width="251" height="5" opacity="0.3" />
          </g>
          <rect x="72" y="3" width="4" height="35" fill="url(#fadeY)" />
          <rect x="85" y="3" width="5" height="35" fill="url(#fadeY)" />
          <path d="M73 38h16" stroke="#000" strokeWidth="2" />
          <path d="M102 8v30M118 8v30" stroke="#000" strokeOpacity="0.04" strokeWidth="3" />
        </Smear>
      </SystemBar>
    </Screen>
  );
}
